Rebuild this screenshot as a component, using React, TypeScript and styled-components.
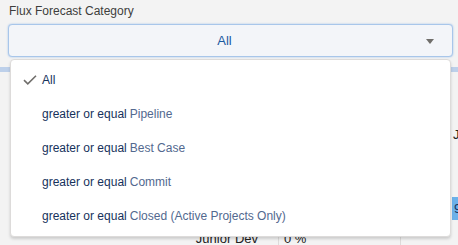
import React from "react";
import styled, { createGlobalStyle } from "styled-components";

const options = [
  { prefix: "", label: "All", selected: true },
  { prefix: "greater or equal", label: "Pipeline" },
  { prefix: "greater or equal", label: "Best Case" },
  { prefix: "greater or equal", label: "Commit" },
  { prefix: "greater or equal", label: "Closed (Active Projects Only)" },
];

export default function App() {
  return (
    <>
      <GlobalStyle />
      <Page>
        <Label>Flux Forecast Category</Label>
        <Combobox>
          <SelectButton>
            <SelectValue>All</SelectValue>
            <Caret />
          </SelectButton>
          <Listbox>
            {options.map((opt) => (
              <Option key={opt.label}>
                <CheckSlot>
                  {opt.selected && (
                    <svg width="14" height="10" viewBox="0 0 14 10">
                      <path
                        d="M1 5.2 L4.8 8.8 L13 0.8"
                        fill="none"
                        stroke="#706e6b"
                        strokeWidth="1.6"
                      />
                    </svg>
                  )}
                </CheckSlot>
                {opt.prefix && <Prefix>{opt.prefix}</Prefix>}
                <OptionLabel plain={!opt.prefix}>{opt.label}</OptionLabel>
              </Option>
            ))}
          </Listbox>
        </Combobox>
        <Behind>
          <HeaderBar />
          <TableRow height={125} pad={55}>
            <Cell />
            <Cell divided />
            <Cell divided />
            <SideCell>Junior Lead</SideCell>
          </TableRow>
          <TableRow height={23} pad={0}>
            <Cell />
            <Cell />
            <Cell />
            <BlueCell>9</BlueCell>
          </TableRow>
          <TableRow height={40} pad={11}>
            <NameCell>Junior Dev</NameCell>
            <Cell divided>0 %</Cell>
            <Cell divided />
            <Cell />
          </TableRow>
        </Behind>
      </Page>
    </>
  );
}

const GlobalStyle = createGlobalStyle`
  html, body {
    margin: 0;
    padding: 0;
    overflow: hidden;
    background: #f3f3f3;
  }
  body {
    font-family: "Liberation Sans", Arial, sans-serif;
  }
`;

const Page = styled.div`
  width: 458px;
  height: 245px;
  overflow: hidden;
  padding-top: 4px;
  box-sizing: border-box;
`;

const Label = styled.div`
  font-size: 12px;
  line-height: 14px;
  color: #3e3e3c;
  padding-left: 9px;
  margin-bottom: 6px;
`;

const Combobox = styled.div`
  position: relative;
  margin: 0 5px 0 8px;
  z-index: 2;
`;

const SelectButton = styled.div`
  height: 33px;
  box-sizing: border-box;
  border: 1px solid #a8c6ea;
  box-shadow: 0 0 2px #9dbfe9;
  border-radius: 4px;
  background: #f3f5f9;
  display: flex;
  align-items: center;
  padding: 0 18px 0 12px;
`;

const SelectValue = styled.span`
  flex: 1;
  text-align: center;
  font-size: 13px;
  color: #1b5aa0;
  padding-left: 2px;
`;

const Caret = styled.span`
  width: 0;
  height: 0;
  border-left: 4.5px solid transparent;
  border-right: 4.5px solid transparent;
  border-top: 5px solid #706e6b;
  margin-top: 1px;
`;

const Listbox = styled.div`
  position: absolute;
  top: 35px;
  left: 2px;
  right: 2px;
  background: #fff;
  border: 1px solid #dddbda;
  border-radius: 4px;
  box-shadow: 0 2px 3px rgba(0, 0, 0, 0.16);
  padding: 3px 0;
`;

const Option = styled.div`
  height: 34px;
  display: flex;
  align-items: center;
  font-size: 12px;
  white-space: nowrap;
`;

const CheckSlot = styled.span`
  box-sizing: border-box;
  width: 31px;
  padding-left: 12px;
  display: flex;
  align-items: center;
`;

const Prefix = styled.span`
  color: #16325c;
  margin-right: 3px;
`;

const OptionLabel = styled.span<{ plain?: boolean }>`
  color: ${(p) => (p.plain ? "#16325c" : "#52698f")};
`;

const Behind = styled.div`
  position: relative;
  z-index: 1;
  margin-top: 10px;
`;

const HeaderBar = styled.div`
  height: 5px;
  background: #bdd0ea;
`;

const TableRow = styled.div<{ height: number; pad: number }>`
  display: grid;
  grid-template-columns: 278px 122px 52px 1fr;
  height: ${(p) => p.height}px;
  box-sizing: border-box;
  padding-top: ${(p) => p.pad}px;
`;

const Cell = styled.div<{ divided?: boolean }>`
  border-left: ${(p) => (p.divided ? "1px solid #dddbda" : "none")};
  font-size: 13px;
  color: #222;
  padding-left: 5px;
  white-space: nowrap;
  overflow: hidden;
`;

const SideCell = styled.div`
  font-size: 13px;
  color: #222;
  white-space: nowrap;
  overflow: hidden;
  padding-left: 1px;
`;

const BlueCell = styled.div`
  background: #6cb1ea;
  color: #16325c;
  font-size: 13px;
  padding-left: 2px;
  display: flex;
  align-items: center;
`;

const NameCell = styled.div`
  font-size: 13px;
  color: #222;
  text-align: right;
  padding-right: 20px;
`;
